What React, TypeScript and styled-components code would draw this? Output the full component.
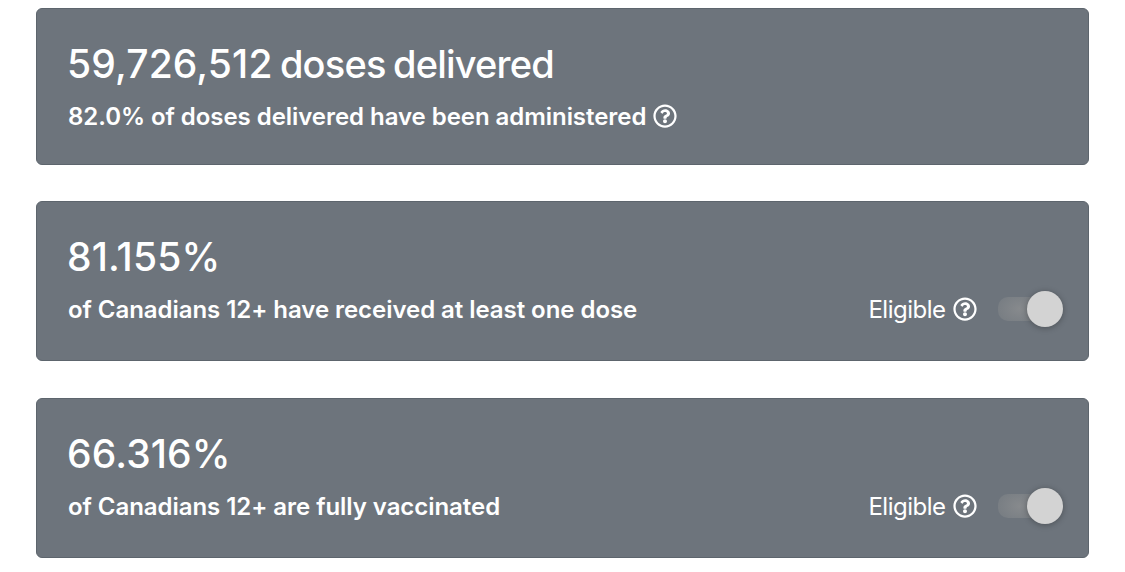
import React from "react"
import styled, { createGlobalStyle } from "styled-components";
import { FaRegQuestionCircle } from "react-icons/fa"

const COLOR = {
  CARD: "#6d747c",
  BORDER: "#5d656d",
  TEXT: "#ffffff",
  THUMB: "#d3d3d3",
};

interface CardProps {
  value: string,
  unit?: string,
  label: string,
  help?: boolean,
  toggle?: boolean,
}

const StatCard: React.FC<CardProps> = ({ value, unit, label, help, toggle }) => {

  return (
    <StyledCard $tall={ toggle }>
      <StyledValue>
        { value }
        { unit && <StyledUnit> { unit }</StyledUnit> }
      </StyledValue>
      <StyledRow>
        <StyledLabel>{ label }</StyledLabel>
        { help && <StyledIcon/> }
        { toggle && (
          <StyledToggle>
            <StyledToggleText>Eligible</StyledToggleText>
            <StyledIcon/>
            <StyledTrack>
              <StyledThumb/>
            </StyledTrack>
          </StyledToggle>
        ) }
      </StyledRow>
    </StyledCard>
  );
};

const App: React.FC = () => {

  return (
    <StyledPage>
      <GlobalStyle/>
      <StatCard value="59,726,512" unit="doses delivered" label="82.0% of doses delivered have been administered" help/>
      <StatCard value="81.155%" label="of Canadians 12+ have received at least one dose" toggle/>
      <StatCard value="66.316%" label="of Canadians 12+ are fully vaccinated" toggle/>
    </StyledPage>
  );
};

export default App;

const GlobalStyle = createGlobalStyle`
  body {
    margin: 0;
    background: #ffffff;
    font-family: Inter, sans-serif;
  }
`;

const StyledPage = styled.div`
  display: flex;
  flex-direction: column;
  gap: 36.5px;
  padding: 7.7px 36px 14px;
`;

const StyledCard = styled.div<{ $tall?: boolean }>`
  box-sizing: border-box;
  height: ${({ $tall }) => $tall ? 160 : 157}px;
  padding: 30px 25px 0 30px;
  color: ${COLOR.TEXT};
  background-color: ${COLOR.CARD};
  border: 1px solid ${COLOR.BORDER};
  border-radius: 6px;
`;

const StyledValue = styled.div`
  font-size: 39px;
  font-weight: 450;
  line-height: 50px;
  letter-spacing: 0.15px;
  white-space: nowrap;
`;

const StyledUnit = styled.span`
  font-size: 38px;
  font-weight: 500;
  letter-spacing: -0.8px;
  word-spacing: -2px;
`;

const StyledRow = styled.div`
  display: flex;
  align-items: center;
  height: 36px;
  margin-top: 9px;
  padding-left: 1px;
`;

const StyledLabel = styled.div`
  padding-top: 1px;
  font-size: 24px;
  font-weight: 600;
  letter-spacing: -0.05px;
  white-space: nowrap;
`;

const StyledIcon = styled(FaRegQuestionCircle)`
  width: 24px;
  height: 24px;
  margin-left: 7px;
  flex-shrink: 0;
`;

const StyledToggle = styled.div`
  display: flex;
  align-items: center;
  margin-left: auto;
`;

const StyledToggleText = styled.div`
  padding-top: 1px;
  font-size: 24px;
  letter-spacing: -0.5px;
`;

const StyledTrack = styled.div`
  display: flex;
  align-items: center;
  justify-content: flex-end;
  width: 65.5px;
  height: 24px;
  margin-left: 21px;
  background: radial-gradient(ellipse 28px 20px at 22px 12px, #878a8d, #757b81);
  border-radius: 10px;
`;

const StyledThumb = styled.div`
  width: 36px;
  height: 36px;
  flex-shrink: 0;
  background-color: ${COLOR.THUMB};
  border-radius: 50%;
  box-shadow: 0 1px 6px rgba(0, 0, 0, 0.3);
`;
